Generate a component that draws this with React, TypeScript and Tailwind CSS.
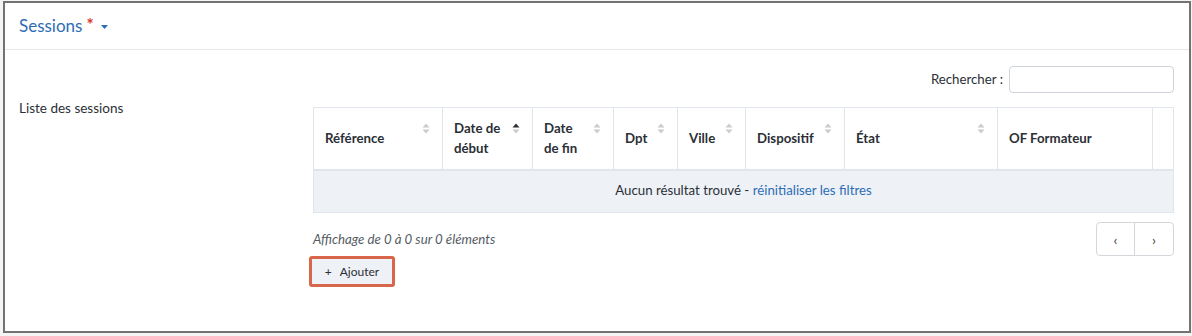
import React from "react";

// Colonnes du tableau des sessions (largeurs relevées sur la maquette)
const columns = [
  { label: "Référence", width: 129, sort: "none" },
  { label: "Date de début", width: 90, sort: "asc" },
  { label: "Date de fin", width: 81, sort: "none" },
  { label: "Dpt", width: 64, sort: "none" },
  { label: "Ville", width: 68, sort: "none" },
  { label: "Dispositif", width: 99, sort: "none" },
  { label: "État", width: 153, sort: "none" },
  { label: "OF Formateur", width: 155, sort: null },
  { label: "", width: 21, sort: null },
];

function SortIcon({ dir }: { dir: string }) {
  const up = dir === "asc" ? "#2b2f36" : "#c9ccd1";
  const down = dir === "desc" ? "#2b2f36" : "#c9ccd1";
  return (
    <svg width="8" height="11" viewBox="0 0 8 11" className="absolute right-[12px] top-[15px]">
      <path d="M4 0.5 L7.5 4.5 H0.5 Z" fill={up} />
      <path d="M4 10.5 L7.5 6.5 H0.5 Z" fill={down} />
    </svg>
  );
}

export default function App() {
  return (
    <div
      className="h-[336px] w-[1192px] bg-[#f4f4f4] pl-[3px] pt-[1px] pr-[1px] pb-[3px] text-[#2b2f36]"
      style={{ fontFamily: "Lato, 'Open Sans', sans-serif" }}
    >
      <div className="h-full w-full border-2 border-[#737373] bg-white flex flex-col">
        {/* En-tête */}
        <div className="h-[47px] border-b border-[#e4e8ed] flex items-center pl-[14px] gap-[4px]">
          <span className="text-[17px] text-[#2d6db4]">Sessions</span>
          <span className="text-[17px] font-bold text-[#d9362f] leading-none -mt-[3px]">*</span>
          <svg width="7" height="4" viewBox="0 0 7 4" className="ml-[3px] mt-[1px]">
            <path d="M0 0 H7 L3.5 4 Z" fill="#2d6db4" />
          </svg>
        </div>

        {/* Corps */}
        <div className="flex flex-1 pr-[15px]">
          <div className="w-[309px] pl-[14px] pt-[49px] text-[13.5px] leading-[18px]">
            Liste des sessions
          </div>
          <div className="flex-1 pt-[16px]">
            <div className="flex justify-end items-center gap-[6px]">
              <span className="text-[13.25px]">Rechercher :</span>
              <input className="h-[27px] w-[165px] rounded-[4px] border border-[#cfd4da] outline-none" />
            </div>

            <table className="mt-[14px] w-full table-fixed border-collapse text-[13.25px]">
              <colgroup>
                {columns.map((c, i) => (
                  <col key={i} style={{ width: c.width }} />
                ))}
              </colgroup>
              <thead>
                <tr>
                  {columns.map((c, i) => (
                    <th
                      key={i}
                      className="relative h-[62px] border border-b-2 border-[#e1e6ec] pl-[11px] pr-[26px] text-left font-bold leading-[20px] align-middle"
                    >
                      {c.label}
                      {c.sort && <SortIcon dir={c.sort} />}
                    </th>
                  ))}
                </tr>
              </thead>
              <tbody>
                <tr>
                  <td
                    colSpan={columns.length}
                    className="h-[43px] border border-[#e1e6ec] bg-[#eef2f7] text-center"
                  >
                    Aucun résultat trouvé -{" "}
                    <a className="text-[#2d6db4]">réinitialiser les filtres</a>
                  </td>
                </tr>
              </tbody>
            </table>

            <div className="mt-[9px] flex justify-between items-start">
              <span className="mt-[8px] text-[13.25px] italic text-[#555b63] leading-[18px]">
                Affichage de 0 à 0 sur 0 éléments
              </span>
              <div className="flex h-[34px] rounded-[4px] border border-[#d3d7dc] text-[14px] text-[#3a3f46]">
                <button className="w-[38px] border-r border-[#d3d7dc] flex items-center justify-center">
                  ‹
                </button>
                <button className="w-[38px] flex items-center justify-center">›</button>
              </div>
            </div>

            <div className="-ml-[4px] inline-flex rounded-[3px] border-[3px] border-[#d7664a]">
              <button className="h-[25px] w-[80px] bg-[#eef1f6] text-[12px] flex items-center justify-center gap-[8px]">
                <span>+</span>
                <span>Ajouter</span>
              </button>
            </div>
          </div>
        </div>
      </div>
    </div>
  );
}
